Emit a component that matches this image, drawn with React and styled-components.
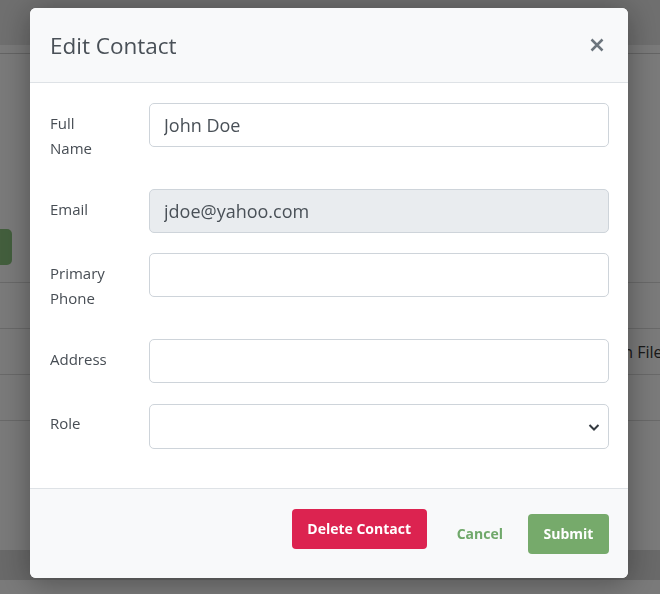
import React from 'react';
import styled, { createGlobalStyle } from 'styled-components';

const GlobalStyle = createGlobalStyle`
  html, body {
    margin: 0;
    padding: 0;
    height: 100%;
    overflow: hidden;
  }
  body {
    font-family: "Open Sans", "Noto Sans", sans-serif;
    background: #f4f4f4;
    color: #212529;
  }
`;

// faux page behind the dialog
const Page = styled.div`
  height: 594px;
  display: flex;
  flex-direction: column;
`;

const TopBar = styled.div`
  height: 45px;
  background: #dedede;
  flex-shrink: 0;
`;

const SubBar = styled.div`
  height: 8px;
  border-bottom: 1px solid #c8c8c8;
  flex-shrink: 0;
`;

const PageContent = styled.div`
  flex: 1;
  padding-top: 175px;
  display: flex;
  flex-direction: column;
`;

const GreenTab = styled.div`
  width: 12px;
  height: 36px;
  background: #86bd7a;
  border-radius: 0 5px 5px 0;
  margin-bottom: 17px;
`;

const TableRow = styled.div`
  height: 45px;
  border-top: 1px solid #d2d2d2;
  display: flex;
  align-items: center;
  padding-left: 592px;
  font-size: 16px;
  color: #333;
  white-space: nowrap;
`;

const BottomBand = styled.div`
  margin-top: auto;
  height: 30px;
  background: #d2d2d2;
  margin-bottom: 14px;
`;

const Overlay = styled.div`
  position: fixed;
  inset: 0;
  background: rgba(0, 0, 0, 0.5);
  padding: 8px 0 0 30px;
`;

const Modal = styled.div`
  width: 598px;
  background: #fff;
  border-radius: 6px;
  overflow: hidden;
  box-shadow: 0 4px 30px rgba(0, 0, 0, 0.35);
`;

const Header = styled.div`
  height: 74px;
  background: #f8f9fa;
  border-bottom: 1px solid #dee2e6;
  display: flex;
  align-items: center;
  justify-content: space-between;
  padding: 0 20px;
`;

const Title = styled.h5`
  margin: 0;
  font-size: 22.5px;
  font-weight: 400;
  color: #495057;
`;

const CloseButton = styled.button`
  border: none;
  background: none;
  padding: 0;
  width: 24px;
  height: 24px;
  display: flex;
  align-items: center;
  justify-content: center;
  margin-right: -1px;
  cursor: pointer;
`;

const Body = styled.div`
  padding: 20px 19px 0 20px;
`;

const FormRow = styled.div`
  display: grid;
  grid-template-columns: 99px 1fr;
  margin-bottom: ${p => (p.$last ? '0' : '20px')};
  align-items: start;
`;

const Label = styled.label`
  font-size: 15px;
  line-height: 25px;
  padding: 8px 31px 8px 0;
  color: #474d54;
`;

const Input = styled.input`
  box-sizing: border-box;
  width: 100%;
  height: 44px;
  border: 1px solid #ced4da;
  border-radius: 5px;
  padding: 0 14px;
  font-family: inherit;
  font-size: 18px;
  color: #495057;
  background: ${p => (p.disabled ? '#e9ecef' : '#fff')};
  outline: none;
`;

const SelectWrap = styled.div`
  position: relative;
  margin-top: 1px;
`;

const Select = styled.select`
  box-sizing: border-box;
  width: 100%;
  height: 45px;
  border: 1px solid #ced4da;
  border-radius: 5px;
  padding: 0 14px;
  font-family: inherit;
  font-size: 18px;
  color: #495057;
  background: #fff;
  appearance: none;
  outline: none;
`;

const Chevron = styled.svg`
  position: absolute;
  right: 9px;
  top: 18px;
  pointer-events: none;
`;

const Footer = styled.div`
  height: 89px;
  background: #f8f9fa;
  border-top: 1px solid #dee2e6;
  margin-top: 39px;
  display: flex;
  align-items: center;
  justify-content: flex-end;
  padding: 0 19px 0 20px;
`;

const Button = styled.button`
  box-sizing: border-box;
  height: 40px;
  border: none;
  border-radius: 4px;
  font-family: inherit;
  font-size: 14px;
  font-weight: 700;
  color: #fff;
  padding: 0;
  white-space: nowrap;
  background: ${p => p.$bg};
  cursor: pointer;
`;

const DeleteButton = styled(Button)`
  width: 135px;
  margin-bottom: 10px;
  margin-right: 18px;
`;

const CancelButton = styled(Button)`
  background: none;
  color: #6fa86a;
  padding: 0 12px;
  margin-right: 13px;
`;

const SubmitButton = styled(Button)`
  width: 81px;
`;

export default function App() {
  return (
    <>
      <GlobalStyle />
      <Page>
        <TopBar />
        <SubBar />
        <PageContent>
          <GreenTab />
          <TableRow />
          <TableRow>Open File</TableRow>
          <TableRow />
          <TableRow />
          <BottomBand />
        </PageContent>
      </Page>
      <Overlay>
        <Modal>
          <Header>
            <Title>Edit Contact</Title>
            <CloseButton aria-label="Close">
              <svg width="14" height="14" viewBox="0 0 14 14">
                <path d="M1.5 1.5 L12.5 12.5 M12.5 1.5 L1.5 12.5" stroke="#6c757d" strokeWidth="2.5" />
              </svg>
            </CloseButton>
          </Header>
          <Body>
            <FormRow>
              <Label>Full Name</Label>
              <Input defaultValue="John Doe" />
            </FormRow>
            <FormRow>
              <Label>Email</Label>
              <Input defaultValue="jdoe@yahoo.com" disabled />
            </FormRow>
            <FormRow>
              <Label>Primary Phone</Label>
              <Input />
            </FormRow>
            <FormRow>
              <Label>Address</Label>
              <Input />
            </FormRow>
            <FormRow $last>
              <Label>Role</Label>
              <SelectWrap>
                <Select defaultValue="">
                  <option value=""></option>
                </Select>
                <Chevron width="12" height="10" viewBox="0 0 12 10">
                  <path d="M1.5 3 L6 7.5 L10.5 3" fill="none" stroke="#343a40" strokeWidth="2" />
                </Chevron>
              </SelectWrap>
            </FormRow>
          </Body>
          <Footer>
            <DeleteButton $bg="#dc2350">Delete Contact</DeleteButton>
            <CancelButton>Cancel</CancelButton>
            <SubmitButton $bg="#76aa6b">Submit</SubmitButton>
          </Footer>
        </Modal>
      </Overlay>
    </>
  );
}
